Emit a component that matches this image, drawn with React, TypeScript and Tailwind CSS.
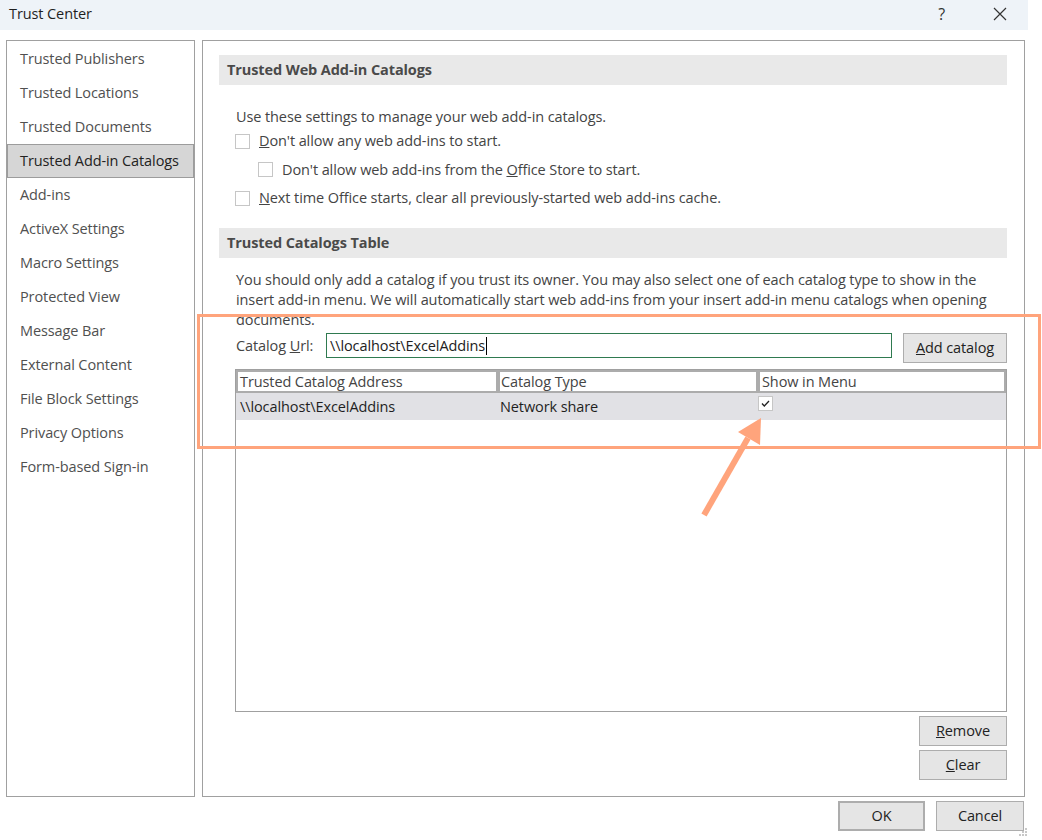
import * as React from "react";

const navItems = [
  "Trusted Publishers",
  "Trusted Locations",
  "Trusted Documents",
  "Trusted Add-in Catalogs",
  "Add-ins",
  "ActiveX Settings",
  "Macro Settings",
  "Protected View",
  "Message Bar",
  "External Content",
  "File Block Settings",
  "Privacy Options",
  "Form-based Sign-in",
];

function Box({ checked = false }: { checked?: boolean }) {
  return (
    <span className="flex h-[15px] w-[15px] shrink-0 items-center justify-center border border-[#c6c6c6] bg-white">
      {checked && (
        <svg width="11" height="11" viewBox="0 0 11 11" fill="none">
          <path d="M2 5.5 L4.3 8 L9 3" stroke="#222" strokeWidth="1.3" />
        </svg>
      )}
    </span>
  );
}

function Btn({ children, className = "" }: { children: React.ReactNode; className?: string }) {
  return (
    <button
      type="button"
      className={`flex shrink-0 items-center justify-center border border-[#adadad] bg-[#e5e5e5] text-[#222] ${className}`}
    >
      {children}
    </button>
  );
}

function SectionHeader({ title }: { title: string }) {
  return (
    <div className="flex h-[30px] items-center bg-[#e9e9e9] pl-[8px] font-bold text-[#4a4a4a]">
      {title}
    </div>
  );
}

export default function App() {
  return (
    <div
      className="relative h-[840px] w-[1042px] overflow-hidden bg-white text-[14.5px] leading-[20px] tracking-[-0.1px] text-[#444]"
      style={{ fontFamily: '"Open Sans", "Noto Sans", sans-serif' }}
    >
      {/* title bar */}
      <div className="flex h-[30px] w-[1028px] items-center bg-[#eef3f8] pb-[3px] pl-[9px]">
        <span className="text-[#1f1f1f]">Trust Center</span>
        <span className="ml-auto mr-[48px] text-[16px] text-[#333]">?</span>
        <svg width="14" height="14" viewBox="0 0 14 14" className="mr-[21px]">
          <path d="M1 1 L13 13 M13 1 L1 13" stroke="#333" strokeWidth="1.2" />
        </svg>
      </div>

      <div className="mt-[10px] flex pl-[6px]">
        {/* sidebar */}
        <div className="h-[757px] w-[189px] shrink-0 border border-[#a0a0a0] bg-white pt-[1px]">
          {navItems.map((item) => (
            <div
              key={item}
              className={`flex h-[34px] items-center ${
                item === "Trusted Add-in Catalogs"
                  ? "border border-[#9c9c9c] bg-[#d6d6d6] pl-[12px] text-[#222]"
                  : "pl-[13px] text-[#505050]"
              }`}
            >
              {item}
            </div>
          ))}
        </div>

        {/* main panel */}
        <div className="ml-[7px] h-[757px] w-[823px] shrink-0 border border-[#a0a0a0] pl-[16px] pr-[17px] pt-[14px]">
          <SectionHeader title="Trusted Web Add-in Catalogs" />
          <div className="mt-[22px] h-[20px] pl-[17px]">
            Use these settings to manage your web add-in catalogs.
          </div>
          <div className="flex h-[28px] items-center gap-[9px] pl-[16px]">
            <Box />
            <span>
              <u>D</u>on't allow any web add-ins to start.
            </span>
          </div>
          <div className="flex h-[29px] items-center gap-[9px] pl-[39px]">
            <Box />
            <span>
              Don't allow web add-ins from the <u>O</u>ffice Store to start.
            </span>
          </div>
          <div className="flex h-[28px] items-center gap-[9px] pl-[16px]">
            <Box />
            <span>
              <u>N</u>ext time Office starts, clear all previously-started web add-ins cache.
            </span>
          </div>

          <div className="mt-[16px]">
            <SectionHeader title="Trusted Catalogs Table" />
          </div>
          <p className="mt-[12px] whitespace-nowrap pl-[17px]">
            You should only add a catalog if you trust its owner. You may also select one of each catalog type to show in the
            <br />
            insert add-in menu. We will automatically start web add-ins from your insert add-in menu catalogs when opening
            <br />
            documents.
          </p>

          <div className="mt-[3px] flex items-start pl-[17px]">
            <span className="w-[90px] shrink-0 leading-[26px]">
              Catalog <u>U</u>rl:
            </span>
            <div className="flex h-[25px] w-[566px] shrink-0 items-center border border-[#2f7a50] pl-[3px] text-[#222]">
              \\localhost\ExcelAddins
              <span className="ml-[1px] inline-block h-[18px] w-[1px] bg-black" />
            </div>
            <Btn className="ml-[11px] h-[30px] w-[104px]">
              <u>A</u>dd catalog
            </Btn>
          </div>

          <div className="ml-[16px] mt-[6px] h-[343px] w-[772px] border border-[#a0a0a0] bg-white">
            <div className="flex h-[23px] gap-[4px] bg-[#acacac] p-[2px] text-[#444]">
              <div className="w-[258px] bg-white pl-[2px] leading-[19px]">Trusted Catalog Address</div>
              <div className="w-[256px] bg-white pl-[1px] leading-[19px]">Catalog Type</div>
              <div className="flex-1 bg-white pl-[2px] leading-[19px]">Show in Menu</div>
            </div>
            <div className="flex h-[27px] bg-[#e1e1e5] text-[#1f1f1f]">
              <div className="w-[262px] pl-[4px] leading-[27px]">\\localhost\ExcelAddins</div>
              <div className="w-[260px] pl-[2px] leading-[27px]">Network share</div>
              <div className="pt-[3px]">
                <Box checked />
              </div>
            </div>
          </div>

          <div className="mt-[4px] flex flex-col items-end gap-[4px]">
            <Btn className="h-[30px] w-[88px]">
              <u>R</u>emove
            </Btn>
            <Btn className="h-[30px] w-[88px]">
              <u>C</u>lear
            </Btn>
          </div>
        </div>
      </div>

      {/* footer */}
      <div className="mt-[4px] flex justify-end gap-[11px] pr-[18px]">
        <Btn className="h-[30px] w-[87px] border-2 border-[#217346]">OK</Btn>
        <Btn className="h-[30px] w-[88px]">Cancel</Btn>
      </div>

      {/* resize grip */}
      <svg className="absolute bottom-[2px] right-[14px]" width="10" height="10" viewBox="0 0 10 10">
        <rect x="7" y="0" width="2" height="2" fill="#c8c8c8" />
        <rect x="4" y="3" width="2" height="2" fill="#c8c8c8" />
        <rect x="7" y="3" width="2" height="2" fill="#c8c8c8" />
        <rect x="1" y="6" width="2" height="2" fill="#c8c8c8" />
        <rect x="4" y="6" width="2" height="2" fill="#c8c8c8" />
        <rect x="7" y="6" width="2" height="2" fill="#c8c8c8" />
      </svg>

      {/* annotation overlay */}
      <svg className="pointer-events-none absolute left-0 top-0" width="1042" height="840">
        <rect x="198.5" y="315.5" width="841" height="132" fill="none" stroke="#ffa47c" strokeWidth="3" />
        <line x1="704" y1="515" x2="748" y2="438" stroke="#ffa47c" strokeWidth="6" />
        <polygon points="761,418 738,432 760,445" fill="#ffa47c" />
      </svg>
    </div>
  );
}
